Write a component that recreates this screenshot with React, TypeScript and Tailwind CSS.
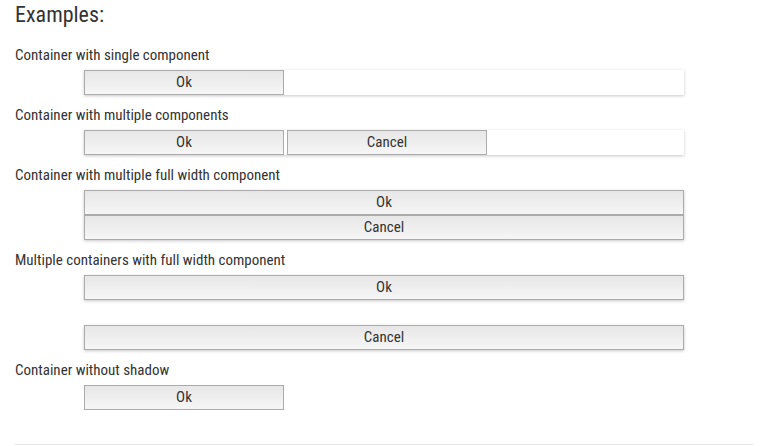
const font = "font-['Liberation_Sans_Narrow','Roboto_Condensed','Liberation_Sans',sans-serif]";

function Btn({ label, full }: { label: string; full?: boolean }) {
  return (
    <button
      className={
        (full ? 'w-full ' : 'w-[200px] ') +
        'h-[25px] border border-[#ababab] bg-gradient-to-b from-[#e7e7e7] to-[#f6f6f6] text-[15px] leading-[23px] text-[#333] text-center'
      }
    >
      {label}
    </button>
  );
}

function Label({ children }: { children: string }) {
  return <div className="text-[15px] leading-[20px] text-[#333]">{children}</div>;
}

const shadow = 'bg-white shadow-[0_1px_3px_rgba(0,0,0,0.22)]';

export default function App() {
  return (
    <div className={`${font} bg-white w-[768px] h-[446px] px-[15px] overflow-hidden`}>
      <h2 className="text-[22px] leading-[30px] text-[#333] mb-[15px]">Examples:</h2>

      <Label>Container with single component</Label>
      <div className={`w-[600px] mx-auto mt-[5px] mb-[10px] flex ${shadow}`}>
        <Btn label="Ok" />
      </div>

      <Label>Container with multiple components</Label>
      <div className={`w-[600px] mx-auto mt-[5px] mb-[10px] flex gap-[3px] ${shadow}`}>
        <Btn label="Ok" />
        <Btn label="Cancel" />
      </div>

      <Label>Container with multiple full width component</Label>
      <div className={`w-[600px] mx-auto mt-[5px] mb-[10px] flex flex-col ${shadow}`}>
        <Btn label="Ok" full />
        <Btn label="Cancel" full />
      </div>

      <Label>Multiple containers with full width component</Label>
      <div className={`w-[600px] mx-auto mt-[5px] mb-[25px] flex ${shadow}`}>
        <Btn label="Ok" full />
      </div>
      <div className={`w-[600px] mx-auto mb-[10px] flex ${shadow}`}>
        <Btn label="Cancel" full />
      </div>

      <Label>Container without shadow</Label>
      <div className="w-[600px] mx-auto mt-[5px] mb-[34px] flex">
        <Btn label="Ok" />
      </div>

      <hr className="border-0 border-t border-[#e5e5e5]" />
    </div>
  );
}
